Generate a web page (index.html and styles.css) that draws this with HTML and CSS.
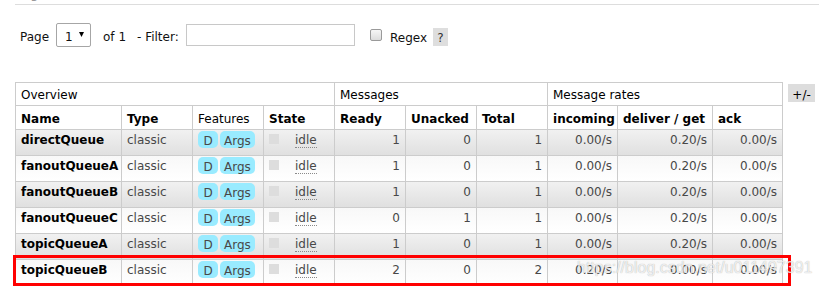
FILE: index.html
```html
<!DOCTYPE html>
<html lang="en">
<head>
<meta charset="utf-8">
<title>Queues</title>
<link rel="stylesheet" href="styles.css">
</head>
<body>
<div class="page">
  <div class="section-title"><h2>Pagination</h2></div>

  <div class="pager">
    <span class="lbl lbl-page">Page</span>
    <span class="select"><span class="select-value">1</span><svg class="select-arrow" width="5" height="5" viewBox="0 0 5 5"><polygon points="0,0 5,0 2.5,5" fill="#000"/></svg></span>
    <span class="lbl lbl-of">of 1</span>
    <span class="lbl lbl-filter">- Filter:</span>
    <span class="text-input"></span>
    <span class="checkbox"></span>
    <span class="lbl lbl-regex">Regex</span>
    <span class="help">?</span>
  </div>

  <div class="table-row">
    <table class="list">
      <colgroup>
        <col class="c-name"><col class="c-std"><col class="c-std"><col class="c-std">
        <col class="c-std"><col class="c-std"><col class="c-std">
        <col class="c-rate"><col class="c-wide"><col class="c-rate">
      </colgroup>
      <thead>
        <tr class="group">
          <th colspan="4">Overview</th>
          <th colspan="3">Messages</th>
          <th colspan="3">Message rates</th>
        </tr>
        <tr class="cols">
          <th>Name</th><th>Type</th><th class="plain">Features</th><th>State</th>
          <th>Ready</th><th>Unacked</th><th>Total</th>
          <th>incoming</th><th>deliver / get</th><th>ack</th>
        </tr>
      </thead>
      <tbody>
        <tr class="alt1">
          <td class="name">directQueue</td><td>classic</td>
          <td class="features"><div class="badges"><span class="badge">D</span><span class="badge">Args</span></div></td>
          <td><span class="state-box"></span><span class="state">idle</span></td>
          <td class="num">1</td><td class="num">0</td><td class="num">1</td>
          <td class="num">0.00/s</td><td class="num">0.20/s</td><td class="num">0.00/s</td>
        </tr>
        <tr class="alt2">
          <td class="name">fanoutQueueA</td><td>classic</td>
          <td class="features"><div class="badges"><span class="badge">D</span><span class="badge">Args</span></div></td>
          <td><span class="state-box"></span><span class="state">idle</span></td>
          <td class="num">1</td><td class="num">0</td><td class="num">1</td>
          <td class="num">0.00/s</td><td class="num">0.20/s</td><td class="num">0.00/s</td>
        </tr>
        <tr class="alt1">
          <td class="name">fanoutQueueB</td><td>classic</td>
          <td class="features"><div class="badges"><span class="badge">D</span><span class="badge">Args</span></div></td>
          <td><span class="state-box"></span><span class="state">idle</span></td>
          <td class="num">1</td><td class="num">0</td><td class="num">1</td>
          <td class="num">0.00/s</td><td class="num">0.20/s</td><td class="num">0.00/s</td>
        </tr>
        <tr class="alt2">
          <td class="name">fanoutQueueC</td><td>classic</td>
          <td class="features"><div class="badges"><span class="badge">D</span><span class="badge">Args</span></div></td>
          <td><span class="state-box"></span><span class="state">idle</span></td>
          <td class="num">0</td><td class="num">1</td><td class="num">1</td>
          <td class="num">0.00/s</td><td class="num">0.20/s</td><td class="num">0.00/s</td>
        </tr>
        <tr class="alt1">
          <td class="name">topicQueueA</td><td>classic</td>
          <td class="features"><div class="badges"><span class="badge">D</span><span class="badge">Args</span></div></td>
          <td><span class="state-box"></span><span class="state">idle</span></td>
          <td class="num">1</td><td class="num">0</td><td class="num">1</td>
          <td class="num">0.00/s</td><td class="num">0.20/s</td><td class="num">0.00/s</td>
        </tr>
        <tr class="alt2">
          <td class="name">topicQueueB</td><td>classic</td>
          <td class="features"><div class="badges"><span class="badge">D</span><span class="badge">Args</span></div></td>
          <td><span class="state-box"></span><span class="state">idle</span></td>
          <td class="num">2</td><td class="num">0</td><td class="num">2</td>
          <td class="num">0.20/s</td><td class="num">0.00/s</td><td class="num">0.00/s</td>
        </tr>
      </tbody>
    </table>
    <span class="plus-minus">+/-</span>
  </div>

  <div class="highlight"></div>
  <div class="watermark">https://blog.csdn.net/u011497391</div>
</div>
</body>
</html>
```

FILE: styles.css
```css
* { box-sizing: border-box; }

html, body {
  margin: 0;
  padding: 0;
  background: #fff;
}

body {
  font-family: "DejaVu Sans", Verdana, sans-serif;
  font-size: 12px;
  line-height: 14px;
  color: #484848;
}

.page {
  position: relative;
  width: 819px;
  height: 286px;
  overflow: hidden;
}

/* cut-off section heading */
.section-title {
  margin-left: 15px;
  height: 5px;
  border-bottom: 1px solid #ddd;
  overflow: hidden;
}

.section-title h2 {
  margin: -13px 0 0 0;
  font-size: 13px;
  line-height: 13px;
  font-weight: normal;
  color: #999;
}

/* pagination / filter bar */
.pager {
  display: flex;
  align-items: center;
  height: 24px;
  margin-top: 18px;
  padding-left: 20px;
  color: #111;
}

.lbl {
  display: block;
  padding-top: 3px;
  white-space: nowrap;
}

.lbl-page { width: 36px; }
.lbl-of { width: 34px; margin-left: 12px; }
.lbl-filter { width: 49px; }
.lbl-regex { width: 43px; margin-left: 8px; padding-top: 5px; }

.select {
  display: flex;
  align-items: center;
  width: 35px;
  height: 24px;
  padding-left: 8px;
  border: 1px solid #a6a6a6;
  border-radius: 2px;
  background: #fff;
}

.select-value { padding-top: 3px; }

.select-arrow {
  display: block;
  margin-left: 6px;
  margin-top: -1px;
}

.text-input {
  display: block;
  width: 169px;
  height: 22px;
  border: 1px solid #c8c8c8;
  background: #fff;
}

.checkbox {
  display: block;
  width: 12px;
  height: 12px;
  margin-left: 15px;
  border: 1px solid #9a9a9a;
  border-radius: 2px;
  background: linear-gradient(#f6f6f6, #dcdcdc);
}

.help {
  display: block;
  align-self: flex-start;
  width: 15px;
  height: 18px;
  margin-top: 5px;
  padding-top: 3px;
  background: #dedede;
  color: #333;
  text-align: center;
}

/* queue table */
.table-row {
  display: flex;
  align-items: flex-start;
  margin-top: 35px;
  padding-left: 15px;
}

table.list {
  border-collapse: separate;
  border-spacing: 0;
  table-layout: fixed;
  width: 768px;
  border-top: 1px solid #ccc;
  border-left: 1px solid #ccc;
}

col.c-name { width: 106px; }
col.c-std { width: 71px; }
col.c-rate { width: 70px; }
col.c-wide { width: 95px; }

table.list th,
table.list td {
  border-right: 1px solid #ccc;
  border-bottom: 1px solid #ccc;
  text-align: left;
  vertical-align: top;
  white-space: nowrap;
  overflow: hidden;
  padding: 0 5px;
}

table.list th {
  background: #fff;
  color: #000;
}

tr.group th {
  padding: 5px 5px 3px;
  font-weight: normal;
}

tr.cols th {
  padding: 6px 5px 3px;
  font-weight: bold;
}

tr.cols th.plain { font-weight: normal; }

table.list tbody td {
  padding: 3px 5px 8px;
}

tr.alt1 td { background: linear-gradient(#f1f1f1, #e0e0e0); }
tr.alt2 td { background: linear-gradient(#f8f8f8, #ffffff); }

td.name {
  font-weight: bold;
  color: #000;
}

table.list tbody td.num { text-align: right; }

table.list tbody td.features {
  padding-top: 1px;
  padding-bottom: 0;
}

.badges {
  display: flex;
  gap: 2px;
}

.badge {
  display: block;
  min-width: 20px;
  height: 17px;
  padding: 3px 4px 0;
  border-radius: 5px;
  background: #99ebff;
  color: #484848;
  text-align: center;
}

.state-box {
  display: inline-block;
  width: 10px;
  height: 10px;
  margin-right: 16px;
  background: #dddddd;
}

.state {
  border-bottom: 1px dotted #8a8a8a;
}

.plus-minus {
  display: block;
  width: 27px;
  height: 18px;
  margin: 2px 0 0 5px;
  padding-top: 4px;
  background: #dddddd;
  color: #000;
  text-align: center;
}

/* annotation overlays */
.highlight {
  position: absolute;
  left: 13px;
  top: 255px;
  width: 778px;
  height: 31px;
  border: 3px solid #ff0000;
}

.watermark {
  position: absolute;
  left: 577px;
  top: 260px;
  font-family: "Liberation Sans", Arial, sans-serif;
  font-size: 16px;
  line-height: 16px;
  color: rgba(255, 255, 255, 0.8);
  text-shadow: 0 0 1px rgba(0, 0, 0, 0.35);
  white-space: nowrap;
}
```
